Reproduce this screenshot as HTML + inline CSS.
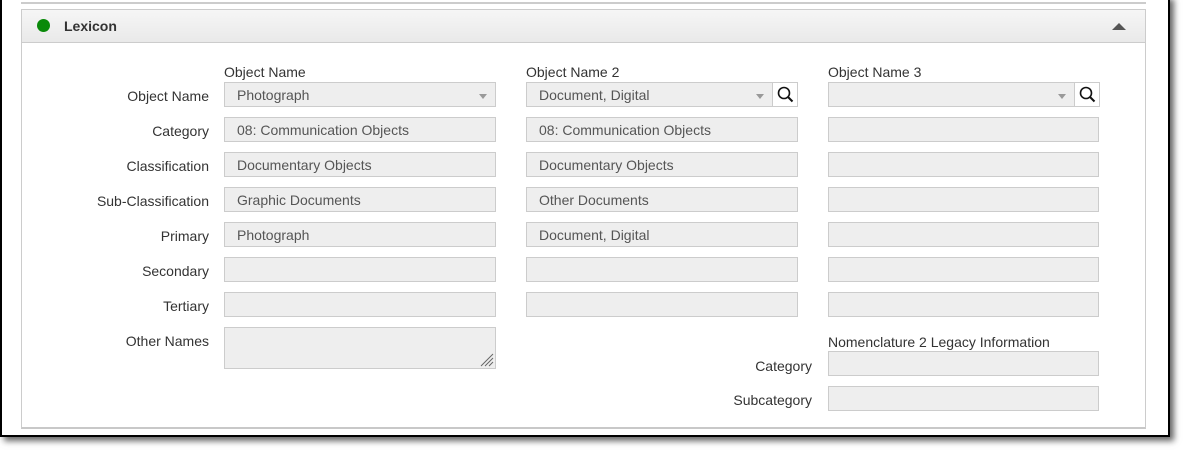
<!DOCTYPE html>
<html><head><style>
body{margin:0;width:1183px;height:450px;background:#fff;position:relative;overflow:hidden;font-family:"Liberation Sans",Arial,sans-serif;}
.a{position:absolute;}
.frame{left:0;top:-5px;width:1166px;height:440px;border-left:2px solid #000;border-right:2px solid #000;border-bottom:2px solid #000;box-shadow:4px 4px 6px rgba(0,0,0,.6);}
.panel{left:21px;top:9px;width:1123px;height:417px;border:1px solid #ccc;border-bottom:2px solid #c8c8c8;background:#fff;}
.hdr{left:21px;top:9px;width:1123px;height:32px;background:linear-gradient(#f6f6f6,#e9e9e9);border:1px solid #ccc;}
.dot{left:37px;top:19px;width:13px;height:13px;border-radius:50%;background:#0a8a0a;}
.title{left:64px;top:18px;font-size:14px;font-weight:bold;color:#333;}
.tri{left:1112px;top:23px;width:0;height:0;border-left:7px solid transparent;border-right:7px solid transparent;border-bottom:7px solid #555;}
.lbl{font-size:14px;color:#333;text-align:right;width:200px;}
.cap{font-size:14px;color:#333;}
.in{background:#eee;border:1px solid #ccc;font-size:14px;color:#555;line-height:24px;padding-left:12px;box-sizing:border-box;height:25px;}
.arr{position:absolute;right:8px;top:11px;border-left:4px solid transparent;border-right:4px solid transparent;border-top:5px solid #999;}
.btn{width:26px;height:25px;border:1px solid #ccc;background:#fff;box-sizing:border-box;}
.topline{left:21px;top:2px;width:1125px;height:2px;background:#ccc;}
</style></head><body>
<div class="a frame"></div>
<div class="a topline"></div>
<div class="a panel"></div>
<div class="a hdr"></div>
<div class="a dot"></div>
<div class="a title">Lexicon</div>
<div class="a tri"></div>

<div class="a cap" style="left:224px;top:64px">Object Name</div>
<div class="a cap" style="left:526px;top:64px">Object Name 2</div>
<div class="a cap" style="left:828px;top:64px">Object Name 3</div>

<div class="a lbl" style="left:9px;top:88px">Object Name</div>
<div class="a lbl" style="left:9px;top:123px">Category</div>
<div class="a lbl" style="left:9px;top:158px">Classification</div>
<div class="a lbl" style="left:9px;top:193px">Sub-Classification</div>
<div class="a lbl" style="left:9px;top:228px">Primary</div>
<div class="a lbl" style="left:9px;top:263px">Secondary</div>
<div class="a lbl" style="left:9px;top:298px">Tertiary</div>
<div class="a lbl" style="left:9px;top:333px">Other Names</div>

<div class="a in" style="left:224px;top:82px;width:272px">Photograph<span class="arr"></span></div>
<div class="a in" style="left:526px;top:82px;width:247px">Document, Digital<span class="arr"></span></div>
<div class="a btn" style="left:772px;top:82px"><svg width="24" height="23" viewBox="0 0 24 23"><circle cx="11" cy="10" r="5.5" fill="none" stroke="#111" stroke-width="1.6"/><path d="M15 14L19.5 18.5" stroke="#111" stroke-width="2"/></svg></div>
<div class="a in" style="left:828px;top:82px;width:247px"><span class="arr"></span></div>
<div class="a btn" style="left:1074px;top:82px"><svg width="24" height="23" viewBox="0 0 24 23"><circle cx="11" cy="10" r="5.5" fill="none" stroke="#111" stroke-width="1.6"/><path d="M15 14L19.5 18.5" stroke="#111" stroke-width="2"/></svg></div>

<div class="a in" style="left:224px;top:117px;width:272px">08: Communication Objects</div>
<div class="a in" style="left:526px;top:117px;width:272px">08: Communication Objects</div>
<div class="a in" style="left:828px;top:117px;width:271px"></div>
<div class="a in" style="left:224px;top:152px;width:272px">Documentary Objects</div>
<div class="a in" style="left:526px;top:152px;width:272px">Documentary Objects</div>
<div class="a in" style="left:828px;top:152px;width:271px"></div>
<div class="a in" style="left:224px;top:187px;width:272px">Graphic Documents</div>
<div class="a in" style="left:526px;top:187px;width:272px">Other Documents</div>
<div class="a in" style="left:828px;top:187px;width:271px"></div>
<div class="a in" style="left:224px;top:222px;width:272px">Photograph</div>
<div class="a in" style="left:526px;top:222px;width:272px">Document, Digital</div>
<div class="a in" style="left:828px;top:222px;width:271px"></div>
<div class="a in" style="left:224px;top:257px;width:272px"></div>
<div class="a in" style="left:526px;top:257px;width:272px"></div>
<div class="a in" style="left:828px;top:257px;width:271px"></div>
<div class="a in" style="left:224px;top:292px;width:272px"></div>
<div class="a in" style="left:526px;top:292px;width:272px"></div>
<div class="a in" style="left:828px;top:292px;width:271px"></div>
<div class="a in" style="left:224px;top:327px;width:272px;height:42px"><svg style="position:absolute;right:1px;bottom:1px" width="14" height="14"><path d="M13 1L1 13M13 5L5 13M13 9L9 13" stroke="#666" stroke-width="1"/></svg></div>

<div class="a cap" style="left:828px;top:334px">Nomenclature 2 Legacy Information</div>
<div class="a lbl" style="left:612px;top:358px">Category</div>
<div class="a lbl" style="left:612px;top:392px">Subcategory</div>
<div class="a in" style="left:828px;top:351px;width:271px"></div>
<div class="a in" style="left:828px;top:386px;width:271px"></div>
</body></html>
